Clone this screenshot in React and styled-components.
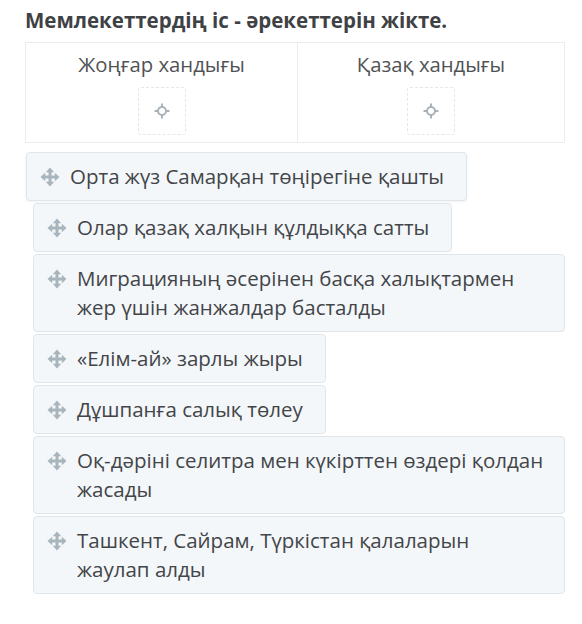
import React from "react";
import styled, { createGlobalStyle } from "styled-components";

const GlobalStyle = createGlobalStyle`
  body {
    margin: 0;
    background: #fff;
    font-family: "Open Sans", "Noto Sans", sans-serif;
  }
`;

const Page = styled.div`
  width: 540px;
  padding: 6px 17px 0 25px;
`;

const Title = styled.h2`
  margin: 0;
  font-size: 20.5px;
  font-weight: 700;
  line-height: 28px;
  color: #3f4245;
`;

const Table = styled.div`
  display: grid;
  grid-template-columns: 271px 1fr;
  margin-top: 8px;
  border: 1px solid #ececec;
`;

const Column = styled.div`
  display: flex;
  flex-direction: column;
  align-items: center;
  padding: 7px 0 7px;
  border-left: ${(p) => (p.first ? "none" : "1px solid #ececec")};
`;

const ColumnTitle = styled.div`
  font-size: 20.3px;
  line-height: 28px;
  color: #505356;
`;

const DropBox = styled.div`
  width: 46px;
  height: 46px;
  margin-top: 9px;
  border: 1px dashed #e6e6e6;
  border-radius: 3px;
  display: flex;
  align-items: center;
  justify-content: center;
`;

const List = styled.div`
  display: flex;
  flex-direction: column;
  align-items: flex-start;
  gap: 2px;
  margin-top: 9px;
  padding-left: 8px;
`;

const Item = styled.div`
  box-sizing: border-box;
  display: flex;
  align-items: flex-start;
  gap: 10px;
  max-width: 532px;
  width: ${(p) => (p.full ? "532px" : "auto")};
  padding: 9px ${(p) => (p.full ? "14px" : "22px")} 9px 13px;
  background: #f3f7fa;
  border: 1px solid #dfe6eb;
  border-radius: 4px;
  font-size: 20.5px;
  line-height: 29px;
  color: #434548;
  transform: translateX(${(p) => (p.lifted ? "-7px" : "0")});
  box-shadow: ${(p) => (p.lifted ? "0 1px 3px rgba(0,0,0,0.06)" : "none")};
`;

const Handle = styled.span`
  flex: none;
  display: flex;
  align-items: center;
  height: 29px;
`;

function MoveIcon() {
  return (
    <svg width="20" height="20" viewBox="0 0 20 20" fill="#a9b5bd">
      <rect x="8.5" y="4" width="3" height="12" />
      <rect x="4" y="8.5" width="12" height="3" />
      <polygon points="10,0.5 14.2,5.2 5.8,5.2" />
      <polygon points="10,19.5 14.2,14.8 5.8,14.8" />
      <polygon points="0.5,10 5.2,5.8 5.2,14.2" />
      <polygon points="19.5,10 14.8,5.8 14.8,14.2" />
    </svg>
  );
}

function Target() {
  return (
    <svg width="16" height="16" viewBox="0 0 16 16" fill="none" stroke="#aab2b8" strokeWidth="2">
      <circle cx="8" cy="8" r="4" />
      <line x1="8" y1="0.5" x2="8" y2="4" />
      <line x1="8" y1="12" x2="8" y2="15.5" />
      <line x1="0.5" y1="8" x2="4" y2="8" />
      <line x1="12" y1="8" x2="15.5" y2="8" />
    </svg>
  );
}

const items = [
  { text: "Орта жүз Самарқан төңірегіне қашты", lifted: true },
  { text: "Олар қазақ халқын құлдыққа сатты" },
  { text: "Миграцияның әсерінен басқа халықтармен жер үшін жанжалдар басталды", full: true },
  { text: "«Елім-ай» зарлы жыры" },
  { text: "Дұшпанға салық төлеу" },
  { text: "Оқ-дәріні селитра мен күкірттен өздері қолдан жасады", full: true },
  { text: "Ташкент, Сайрам, Түркістан қалаларын жаулап\u00a0алды", full: true },
];

export default function App() {
  return (
    <Page>
      <GlobalStyle />
      <Title>Мемлекеттердің іс - әрекеттерін жікте.</Title>
      <Table>
        <Column first>
          <ColumnTitle>Жоңғар хандығы</ColumnTitle>
          <DropBox>
            <Target />
          </DropBox>
        </Column>
        <Column>
          <ColumnTitle>Қазақ хандығы</ColumnTitle>
          <DropBox>
            <Target />
          </DropBox>
        </Column>
      </Table>
      <List>
        {items.map((it) => (
          <Item key={it.text} lifted={it.lifted} full={it.full}>
            <Handle>
              <MoveIcon />
            </Handle>
            <span>{it.text}</span>
          </Item>
        ))}
      </List>
    </Page>
  );
}
